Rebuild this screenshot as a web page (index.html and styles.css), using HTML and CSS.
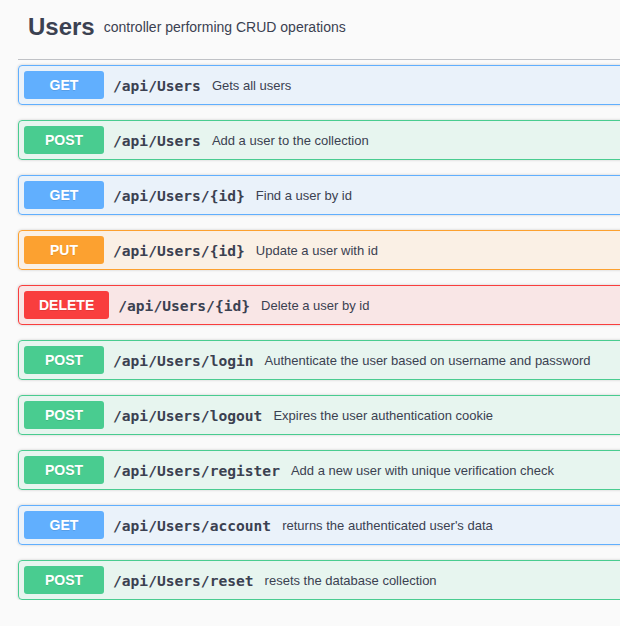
FILE: index.html
```html
<!DOCTYPE html>
<html lang="en">
<head>
<meta charset="utf-8">
<title>Users</title>
<link rel="stylesheet" href="styles.css">
</head>
<body>
<div class="tag-section">
  <h4 class="tag-title">
    <span class="tag-name">Users</span>
    <small class="tag-desc">controller performing CRUD operations</small>
  </h4>
  <div class="ops">
    <div class="op op-get"><span class="method">GET</span><span class="path">/api/Users</span><span class="desc">Gets all users</span></div>
    <div class="op op-post"><span class="method">POST</span><span class="path">/api/Users</span><span class="desc">Add a user to the collection</span></div>
    <div class="op op-get"><span class="method">GET</span><span class="path">/api/Users/{id}</span><span class="desc">Find a user by id</span></div>
    <div class="op op-put"><span class="method">PUT</span><span class="path">/api/Users/{id}</span><span class="desc">Update a user with id</span></div>
    <div class="op op-delete"><span class="method">DELETE</span><span class="path">/api/Users/{id}</span><span class="desc">Delete a user by id</span></div>
    <div class="op op-post"><span class="method">POST</span><span class="path">/api/Users/login</span><span class="desc">Authenticate the user based on username and password</span></div>
    <div class="op op-post"><span class="method">POST</span><span class="path">/api/Users/logout</span><span class="desc">Expires the user authentication cookie</span></div>
    <div class="op op-post"><span class="method">POST</span><span class="path">/api/Users/register</span><span class="desc">Add a new user with unique verification check</span></div>
    <div class="op op-get"><span class="method">GET</span><span class="path">/api/Users/account</span><span class="desc">returns the authenticated user's data</span></div>
    <div class="op op-post"><span class="method">POST</span><span class="path">/api/Users/reset</span><span class="desc">resets the database collection</span></div>
  </div>
</div>
</body>
</html>
```

FILE: styles.css
```css
html, body {
  margin: 0;
  padding: 0;
  background: #fafafa;
  overflow: hidden;
}

body {
  font-family: "Liberation Sans", Arial, sans-serif;
  color: #3b4151;
}

.tag-section {
  width: 680px;
  padding-left: 18px;
}

.tag-title {
  display: flex;
  align-items: center;
  margin: 0 0 5px 0;
  padding: 12px 20px 17px 10px;
  border-bottom: 1px solid rgba(59, 65, 81, 0.3);
  font-weight: normal;
}

.tag-name {
  font-size: 24px;
  line-height: 30px;
  font-weight: bold;
  color: #3b4151;
}

.tag-desc {
  font-size: 14px;
  line-height: 16px;
  padding-left: 9px;
  color: #3b4151;
}

.ops {
  display: flex;
  flex-direction: column;
  gap: 15px;
}

.op {
  display: flex;
  align-items: center;
  padding: 5px;
  border: 1px solid;
  border-radius: 4px;
  box-shadow: 0 0 3px rgba(0, 0, 0, 0.19);
}

.method {
  box-sizing: border-box;
  min-width: 80px;
  padding: 6px 15px;
  border-radius: 3px;
  font-size: 14px;
  line-height: 16px;
  font-weight: bold;
  color: #fff;
  text-align: center;
  text-shadow: 0 1px 0 rgba(0, 0, 0, 0.1);
}

.path {
  padding: 0 10px 0 9px;
  font-family: "DejaVu Sans Mono", "Liberation Mono", monospace;
  font-size: 14.6px;
  font-weight: bold;
  color: #3b4151;
}

.desc {
  font-size: 13px;
  color: #3b4151;
  padding-left: 1px;
}

.op-get { background: rgba(97, 175, 254, 0.1); border-color: #61affe; }
.op-get .method { background: #61affe; }

.op-post { background: rgba(73, 204, 144, 0.1); border-color: #49cc90; }
.op-post .method { background: #49cc90; }

.op-put { background: rgba(252, 161, 48, 0.1); border-color: #fca130; }
.op-put .method { background: #fca130; }

.op-delete { background: rgba(249, 62, 62, 0.1); border-color: #f93e3e; }
.op-delete .method { background: #f93e3e; }
```
